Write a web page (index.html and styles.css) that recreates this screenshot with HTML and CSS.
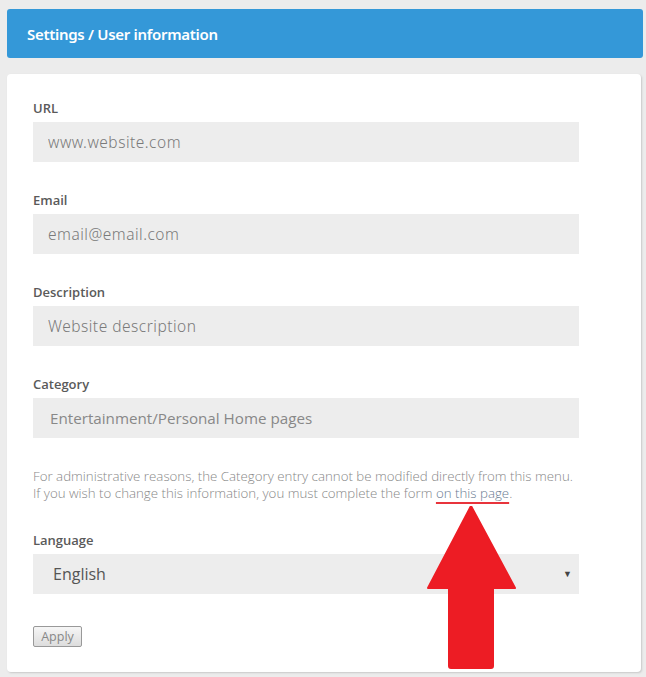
FILE: index.html
```html
<!DOCTYPE html>
<html lang="en">
<head>
  <meta charset="utf-8">
  <title>Settings / User information</title>
  <link rel="stylesheet" href="styles.css">
</head>
<body>
<header class="title-bar">
  <h1>Settings / User information</h1>
</header>
<main class="card">
  <form class="settings-form">
    <div class="field">
      <label for="url-input">URL</label>
      <input type="text" id="url-input" placeholder="www.website.com">
    </div>
    <div class="field">
      <label for="email-input">Email</label>
      <input type="text" id="email-input" placeholder="email@email.com">
    </div>
    <div class="field">
      <label for="desc-input">Description</label>
      <input type="text" id="desc-input" placeholder="Website description">
    </div>
    <div class="field">
      <label for="category-input">Category</label>
      <input type="text" id="category-input" class="locked" value="Entertainment/Personal Home pages" disabled>
    </div>
    <p class="note">
      For administrative reasons, the Category entry cannot be modified directly from this menu.<br>
      If you wish to change this information, you must complete the form <a href="#" class="note-link">on this page</a>.
    </p>
    <div class="field">
      <label for="lang-select">Language</label>
      <div class="select-wrap">
        <select id="lang-select">
          <option>English</option>
        </select>
      </div>
    </div>
    <button type="button" class="apply-btn">Apply</button>
  </form>
  <!-- annotation arrow pointing at the link -->
  <svg class="arrow" width="90" height="164" viewBox="0 0 90 164">
    <path d="M44 0 L88 82 L66 82 L66 160 Q66 162 64 162 L24 162 Q22 162 22 160 L22 82 L1 82 Z" fill="#ed1c24" stroke="#ed1c24" stroke-width="2" stroke-linejoin="round"/>
  </svg>
</main>
</body>
</html>
```
FILE: styles.css
```css
body {
  margin: 0;
  padding: 9px 3px 5px 7px;
  background-color: #ececec;
  font-family: 'Noto Sans', sans-serif;
}

.title-bar {
  background-color: #3498d8;
  border-radius: 3px;
  height: 49px;
  display: flex;
  align-items: center;
  padding-left: 20px;
}

.title-bar h1 {
  margin: 0;
  font-size: 15px;
  font-weight: 600;
  color: #fff;
  letter-spacing: -0.3px;
}

.card {
  position: relative;
  margin-top: 16px;
  margin-right: 2px;
  background-color: #fff;
  border-radius: 4px;
  box-shadow: 1px 1px 2px #c8c8c8;
  padding: 26px 26px 25px 26px;
}

.field {
  margin-bottom: 30px;
}

.field label {
  display: block;
  font-family: 'Open Sans', sans-serif;
  font-size: 13px;
  line-height: 16px;
  font-weight: 600;
  color: #5a5a5a;
  margin-bottom: 6px;
}

.field input {
  display: block;
  box-sizing: border-box;
  width: 546px;
  height: 40px;
  border: none;
  background-color: #ededed;
  padding: 0 15px;
  font-family: 'Noto Sans', sans-serif;
  font-weight: 300;
  font-size: 15.5px;
  letter-spacing: 0.5px;
  color: #666;
}

.field input::placeholder {
  color: #7a7a7a;
}

.field input.locked {
  font-family: 'Open Sans', sans-serif;
  font-weight: 400;
  font-size: 15.2px;
  letter-spacing: 0;
  color: #888;
  padding-left: 17px;
}

.note {
  margin: 30px 0 30px 0;
  font-family: 'Open Sans', sans-serif;
  font-weight: 300;
  font-size: 13.3px;
  line-height: 17px;
  color: #888;
}

.note-link {
  color: #6a7b92;
  text-decoration: underline;
  text-decoration-color: #e8343c;
  text-decoration-thickness: 1.5px;
  text-underline-offset: 4px;
}

.select-wrap {
  position: relative;
  width: 546px;
}

.select-wrap select {
  display: block;
  width: 100%;
  height: 40px;
  border: none;
  background-color: #ededed;
  appearance: none;
  padding: 0 20px;
  font-family: 'Open Sans', sans-serif;
  font-size: 16px;
  color: #555;
}

.select-wrap::after {
  content: "\25BC";
  position: absolute;
  right: 7px;
  top: 13px;
  font-size: 9px;
  color: #444;
  pointer-events: none;
}

.apply-btn {
  margin-top: 2px;
  width: 49px;
  height: 21px;
  padding: 0;
  border: 1px solid #999;
  border-radius: 2px;
  background: linear-gradient(#f6f6f6, #dddddd);
  font-family: 'Open Sans', sans-serif;
  font-size: 12.5px;
  color: #888;
}

.arrow {
  position: absolute;
  left: 420px;
  top: 432px;
}
```
